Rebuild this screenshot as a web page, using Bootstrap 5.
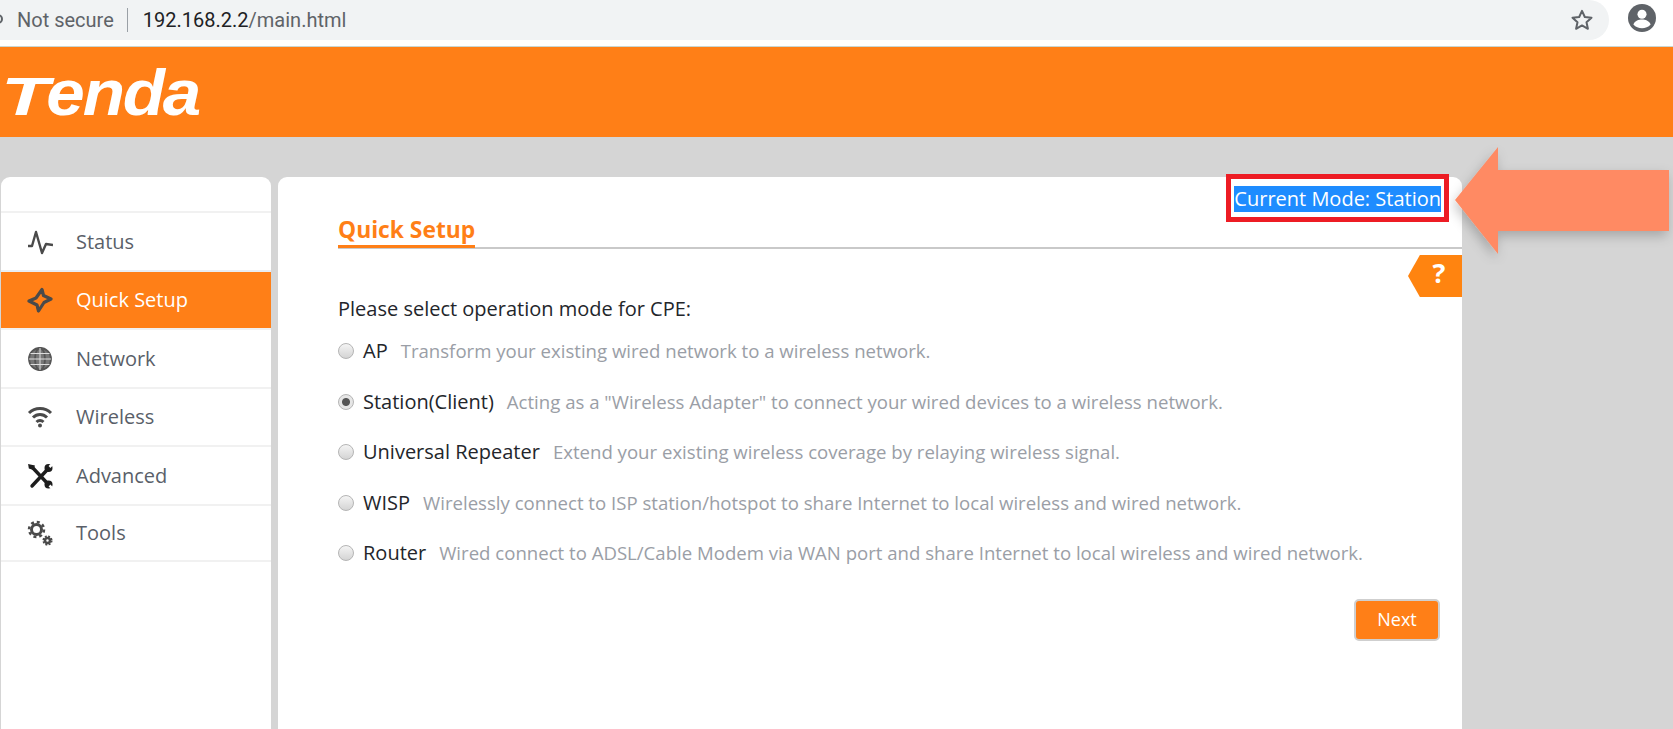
<!DOCTYPE html>
<html lang="en">
<head>
  <meta charset="UTF-8">
  <title>Tenda</title>
  <link href="https://cdn.jsdelivr.net/npm/bootstrap@5.3.0/dist/css/bootstrap.min.css" rel="stylesheet">
  <style>
    html, body { height: 729px; overflow: hidden; }
    body {
      background-color: #d5d5d5;
      font-family: "Open Sans", "Noto Sans", sans-serif;
      position: relative;
    }

    /* browser bar */
    .chrome-bar { height: 47px; background: #fff; border-bottom: 1px solid #c9d6d2; padding-right: 17px; }
    .addr-pill {
      height: 40px; width: 1609px; background: #f1f3f4;
      border-radius: 0 20px 20px 0;
      font-size: 20px; color: #5f6368; padding-left: 17px; padding-right: 15px;
      font-family: Roboto, sans-serif; line-height: 38px;
    }
    .addr-dot { position: absolute; left: -7px; top: 14px; width: 10px; height: 10px; border: 2px solid #5f6368; border-radius: 50%; }
    .addr-sep { width: 1px; height: 24px; background: #9aa0a6; margin: 0 15px 0 13px; }
    .addr-host { color: #202124; }

    /* orange header */
    .brand-bar { height: 90px; background: #ff7f17; padding-top: 16px; }
    .brand-logo {
      display: inline-block; color: #fff; font-family: "Liberation Sans", sans-serif;
      font-weight: 700; font-style: italic; font-size: 64px; line-height: 60px;
      letter-spacing: -2px; margin-left: 1px; transform-origin: left center; transform: scaleX(1.08);
    }
    .brand-first { display: inline-block; font-size: 54px; width: 42px; transform-origin: left bottom; transform: scaleX(1.35); }

    /* side menu */
    .page-row { height: 592px; padding: 40px 0 0 1px; gap: 7px; }
    .side-panel { width: 270px; background: #fff; border-radius: 9px 9px 0 0; padding-top: 34px; }
    .side-panel .list-group-item {
      height: 58.5px; border: 0; border-top: 2px solid #f1f1f1; padding: 1px 0 0 26px;
      font-size: 20px; color: #5a5f69; background: transparent; display: flex; align-items: center;
    }
    .side-panel .list-group-item:last-child { border-bottom: 2px solid #f1f1f1; }
    .side-panel .list-group-item.picked { background: #ff7f17; color: #fff; border-top-color: #e9eef2; }
    .menu-icon { width: 26px; height: 26px; margin-right: 23px; flex-shrink: 0; }

    /* main panel */
    .main-panel { width: 1184px; background: #fff; border-radius: 9px 9px 0 0; padding-left: 60px; }
    .mode-box { border: 5px solid #ed1c24; margin: -3px 13px 0 0; padding: 7px 3px 5px 3px; line-height: 25px; height: 48px; color: #fff; font-size: 20px; }
    .mode-box span { background: #1e8cff; display: block; height: 26px; }
    .title-line { border-bottom: 2px solid #c9c9c9; height: 27px; }
    .title-text {
      display: block; width: fit-content; height: 26px; color: #ff7f17; font-weight: 700; font-size: 22.8px; line-height: 15px;
      border-bottom: 3px solid #ff7f17; margin: 0;
    }
    .help-tag {
      width: 54px; height: 42px; background: #ff8410; color: #fff; font-weight: 700; font-size: 27px; line-height: 36px;
      text-align: center; margin-top: 6px; padding-left: 8px;
      clip-path: polygon(22% 0, 100% 0, 100% 100%, 22% 100%, 0 50%);
    }
    .mode-lead { font-size: 20px; color: #23262b; margin: -1px 0 0; line-height: 26px; }
    .mode-list { margin-top: 4px; }
    .mode-row { height: 50.5px; font-size: 20px; color: #23262b; }
    .mode-radio {
      appearance: none; width: 16px; height: 16px; margin: 0 9px 0 0; border-radius: 50%;
      border: 1px solid #b5b5b5; background: linear-gradient(#f4f4f4, #d4d4d4); flex-shrink: 0;
    }
    .mode-radio:checked { background: radial-gradient(circle, #555 0 3.500px, #e6e6e6 4.500px); }
    .mode-note { color: #9a9ea6; font-size: 18.6px; margin-left: 13px; }
    .next-btn {
      width: 86px; height: 42px; background: #ff7f17; color: #fff; border: 2px solid #cfcfcf; border-radius: 5px;
      font-size: 18px; padding: 0; margin: 20px 22px 0 0;
    }
    .next-btn:hover { background: #ff7f17; color: #fff; border-color: #cfcfcf; }

    /* annotation arrow lies over the page */
    .note-arrow { position: absolute; left: 1450px; top: 140px; width: 223px; height: 125px; }
  </style>
</head>
<body>
  <div class="chrome-bar d-flex justify-content-between">
    <div class="addr-pill d-flex align-items-center position-relative">
      <span class="addr-dot"></span>
      <span>Not secure</span>
      <span class="addr-sep"></span>
      <span><span class="addr-host">192.168.2.2</span>/main.html</span>
      <svg class="ms-auto" width="24" height="24" viewBox="0 0 24 24" fill="none" stroke="#5f6368" stroke-width="2" stroke-linejoin="round"><path d="M12 2.800l2.800 6.200 6.700.7-5 4.500 1.400 6.600L12 17.400l-5.900 3.400 1.400-6.600-5-4.500 6.700-.7z"/></svg>
    </div>
    <svg class="mt-1" width="28" height="28" viewBox="0 0 26 26"><circle cx="13" cy="13" r="13" fill="#5f6368"/><circle cx="13" cy="9.500" r="4.200" fill="#fff"/><path d="M5 19c1.500-3.500 5-4.500 8-4.500s6.500 1 8 4.500c-2 2.300-5 3.500-8 3.500s-6-1.200-8-3.500z" fill="#fff"/></svg>
  </div>

  <div class="brand-bar"><span class="brand-logo"><span class="brand-first">T</span>enda</span></div>

  <div class="page-row d-flex">
    <div class="side-panel">
      <div class="list-group list-group-flush">
        <a class="list-group-item" href="#">
          <svg class="menu-icon" viewBox="0 0 26 26" fill="none" stroke="#4a4a4a" stroke-width="2.400" stroke-linejoin="round"><path d="M1 17h4l4-14 6 21 4-9 7 1"/></svg>Status
        </a>
        <a class="list-group-item picked" href="#">
          <svg class="menu-icon" viewBox="0 0 26 26" fill="none" stroke="#4a4a4a" stroke-width="3.200" stroke-linejoin="round"><path d="M15 2.500l1.500 6 7.500 3.500-7 3.500-5.500 8.500-1.500-6-8-4 7-3z"/></svg>Quick Setup
        </a>
        <a class="list-group-item" href="#">
          <svg class="menu-icon" viewBox="0 0 26 26" fill="none" stroke="#555" stroke-width="1.800"><circle cx="13" cy="13" r="11" fill="#777"/><ellipse cx="13" cy="13" rx="5" ry="11"/><path d="M13 2v22M2 13h22M3.500 7.500h19M3.500 18.500h19" stroke="#ddd" stroke-width="1"/></svg>Network
        </a>
        <a class="list-group-item" href="#">
          <svg class="menu-icon" viewBox="0 0 26 26" fill="none" stroke="#4a4a4a" stroke-width="3"><path d="M2 9c6-6 16-6 22 0M6 13.500c4-4 10-4 14 0M9.500 18c2-2 5-2 7 0"/><circle cx="13" cy="21.500" r="2" fill="#4a4a4a" stroke="none"/></svg>Wireless
        </a>
        <a class="list-group-item" href="#">
          <svg class="menu-icon" viewBox="0 0 26 26" fill="none" stroke="#1d1d1d" stroke-width="3.400" stroke-linecap="round">
            <path d="M5 23L20 7M5 4l16 17"/>
            <circle cx="21.500" cy="5" r="4" fill="#1d1d1d" stroke="none"/>
            <path d="M22.500 4l3-3" stroke="#fff" stroke-width="2.600" stroke-linecap="butt"/>
            <circle cx="21.500" cy="21.500" r="4" fill="#1d1d1d" stroke="none"/>
            <path d="M22.500 22.500l3 3" stroke="#fff" stroke-width="2.600" stroke-linecap="butt"/>
            <path d="M2 2l5 1-1 3-3.500-1z" fill="#1d1d1d" stroke-width="1.500"/>
          </svg>Advanced
        </a>
        <a class="list-group-item" href="#">
          <svg class="menu-icon" viewBox="0 0 26 26" fill="none" stroke="#4a4a4a"><circle cx="9.500" cy="9.500" r="5" stroke-width="3"/><circle cx="9.500" cy="9.500" r="7.500" stroke-width="2.500" stroke-dasharray="3 2.900"/><circle cx="20.500" cy="20.500" r="2.500" stroke-width="2.500"/><circle cx="20.500" cy="20.500" r="4.300" stroke-width="1.500" stroke-dasharray="2 1.400"/></svg>Tools
        </a>
      </div>
    </div>

    <div class="main-panel">
      <div class="d-flex justify-content-end"><div class="mode-box"><span>Current Mode: Station</span></div></div>
      <div class="title-line"><h2 class="title-text">Quick Setup</h2></div>
      <div class="d-flex justify-content-end"><div class="help-tag">?</div></div>
      <p class="mode-lead">Please select operation mode for CPE:</p>
      <div class="mode-list">
        <label class="mode-row d-flex align-items-center"><input class="mode-radio" type="radio" name="mode">AP<span class="mode-note">Transform your existing wired network to a wireless network.</span></label>
        <label class="mode-row d-flex align-items-center"><input class="mode-radio" type="radio" name="mode" checked>Station(Client)<span class="mode-note">Acting as a "Wireless Adapter" to connect your wired devices to a wireless network.</span></label>
        <label class="mode-row d-flex align-items-center"><input class="mode-radio" type="radio" name="mode">Universal Repeater<span class="mode-note">Extend your existing wireless coverage by relaying wireless signal.</span></label>
        <label class="mode-row d-flex align-items-center"><input class="mode-radio" type="radio" name="mode">WISP<span class="mode-note">Wirelessly connect to ISP station/hotspot to share Internet to local wireless and wired network.</span></label>
        <label class="mode-row d-flex align-items-center"><input class="mode-radio" type="radio" name="mode">Router<span class="mode-note">Wired connect to ADSL/Cable Modem via WAN port and share Internet to local wireless and wired network.</span></label>
      </div>
      <div class="d-flex justify-content-end"><button class="btn next-btn" type="button">Next</button></div>
    </div>
  </div>

  <svg class="note-arrow" viewBox="0 0 223 125">
    <defs><filter id="arrowShade" x="-10%" y="-20%" width="120%" height="140%"><feDropShadow dx="-2" dy="5" stdDeviation="6" flood-color="#000" flood-opacity=".22"/></filter></defs>
    <path d="M5 60L48 7v23h171v61H48v23z" fill="#ff8a63" filter="url(#arrowShade)"/>
  </svg>

  <script src="https://cdn.jsdelivr.net/npm/bootstrap@5.3.0/dist/js/bootstrap.bundle.min.js"></script>
</body>
</html>
